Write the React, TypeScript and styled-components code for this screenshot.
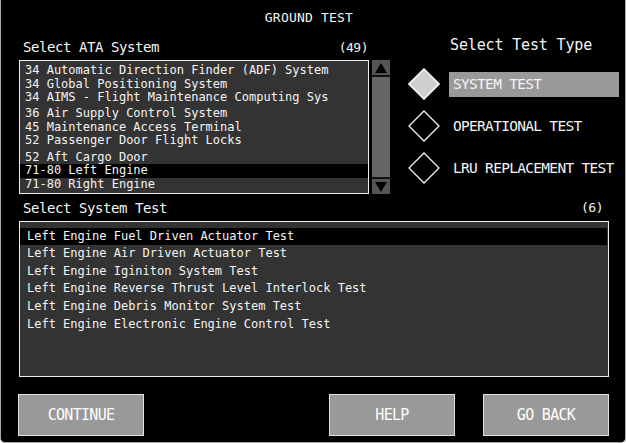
import React from "react";
import styled, { createGlobalStyle } from "styled-components";

const Global = createGlobalStyle`
  html, body { margin: 0; padding: 0; background: #fff; }
  #root { width: 626px; height: 443px; }
`;

const Frame = styled.div`
  width: 626px;
  height: 443px;
  box-sizing: border-box;
  background: #000;
  border: 1px solid #aaa;
  border-top: none;
  border-radius: 0 0 5px 5px;
  display: flex;
  flex-direction: column;
  color: #f4f4f4;
  font-family: "DejaVu Sans Mono", monospace;
  overflow: hidden;
`;

const Header = styled.div`
  height: 34px;
  display: flex;
  align-items: center;
  justify-content: center;
  padding-right: 8px;
  font-size: 13px;
  letter-spacing: 0.2px;
`;

const TopSection = styled.div`
  display: flex;
  height: 160px;
  padding-left: 18px;
`;

const AtaColumn = styled.div`
  width: 371px;
  display: flex;
  flex-direction: column;
`;

const LabelRow = styled.div<{ $h: number; $pl: number; $pr: number }>`
  height: ${(p) => p.$h}px;
  display: flex;
  align-items: center;
  justify-content: space-between;
  padding: 0 ${(p) => p.$pr}px 0 ${(p) => p.$pl}px;
`;

const Label = styled.span`
  font-size: 14px;
  letter-spacing: -0.43px;
`;

const Count = styled.span`
  font-size: 13px;
  letter-spacing: -0.5px;
`;

const ListArea = styled.div`
  display: flex;
  gap: 3px;
  height: 134px;
`;

const AtaList = styled.div`
  width: 350px;
  box-sizing: border-box;
  border: 1px solid #eee;
  background: #333;
  padding-top: 3.3px;
  overflow: hidden;
`;

const AtaRow = styled.div<{ $selected?: boolean; $extra?: boolean }>`
  height: 13.5px;
  line-height: 13.5px;
  margin-top: ${(p) => (p.$extra ? 2.7 : 0)}px;
  font-size: 12px;
  padding-left: 5px;
  white-space: nowrap;
  background: ${(p) => (p.$selected ? "#000" : "transparent")};
`;

const Scrollbar = styled.div`
  width: 18px;
  display: flex;
  flex-direction: column;
  gap: 2px;
  background: #111;
`;

const ScrollButton = styled.div`
  height: 15px;
  background: #555;
  display: flex;
  align-items: center;
  justify-content: center;
`;

const Track = styled.div`
  flex: 1;
  background: #666;
`;

const RightColumn = styled.div`
  margin-left: 19px;
  width: 216px;
  display: flex;
  flex-direction: column;
`;

const TypeHeading = styled.div`
  height: 22px;
  line-height: 22px;
  padding-left: 41px;
  font-size: 15px;
  letter-spacing: -0.15px;
`;

const Options = styled.div`
  margin-top: 7px;
  display: flex;
  flex-direction: column;
`;

const OptionRow = styled.div`
  height: 42px;
  display: flex;
  align-items: center;
`;

const DiamondIcon = styled.svg`
  width: 32px;
  height: 32px;
  margin-left: -1px;
  margin-right: 9px;
  flex: none;
`;

const OptionLabel = styled.div<{ $selected?: boolean }>`
  width: 170px;
  height: 25px;
  line-height: 25px;
  padding-left: 4px;
  box-sizing: border-box;
  background: ${(p) => (p.$selected ? "#999" : "transparent")};
  font-size: 14.5px;
  letter-spacing: -0.7px;
  white-space: nowrap;
`;

const TestList = styled.div`
  margin: 0 16px 0 18px;
  height: 156px;
  box-sizing: border-box;
  border: 1px solid #eee;
  background: #333;
  padding-top: 5.7px;
`;

const TestRow = styled.div<{ $selected?: boolean }>`
  height: 17.6px;
  line-height: 17.6px;
  font-size: 12px;
  padding-left: 7px;
  margin-right: 1px;
  white-space: nowrap;
  background: ${(p) => (p.$selected ? "#000" : "transparent")};
`;

const ButtonRow = styled.div`
  margin-top: 17px;
  height: 42px;
  display: flex;
  padding: 0 16px 0 17px;
`;

const Spacer = styled.div`
  flex: 1;
`;

const Button = styled.button<{ $mr?: number }>`
  width: 126px;
  height: 42px;
  box-sizing: border-box;
  margin: 0 ${(p) => p.$mr ?? 0}px 0 0;
  padding: 0;
  background: #999;
  border: 1px solid #e2e2e2;
  color: #fff;
  font-family: "DejaVu Sans Mono", monospace;
  font-size: 15px;
  letter-spacing: -0.7px;
  cursor: pointer;
`;

const ataSystems = [
  { name: "34 Automatic Direction Finder (ADF) System" },
  { name: "34 Global Positioning System" },
  { name: "34 AIMS - Flight Maintenance Computing Sys" },
  { name: "36 Air Supply Control System", extra: true },
  { name: "45 Maintenance Access Terminal" },
  { name: "52 Passenger Door Flight Locks" },
  { name: "52 Aft Cargo Door", extra: true },
  { name: "71-80 Left Engine" },
  { name: "71-80 Right Engine" },
];

const testTypes = ["SYSTEM TEST", "OPERATIONAL TEST", "LRU REPLACEMENT TEST"];

const systemTests = [
  "Left Engine Fuel Driven Actuator Test",
  "Left Engine Air Driven Actuator Test",
  "Left Engine Iginiton System Test",
  "Left Engine Reverse Thrust Level Interlock Test",
  "Left Engine Debris Monitor System Test",
  "Left Engine Electronic Engine Control Test",
];

const Diamond = ({ filled }: { filled: boolean }) => (
  <DiamondIcon viewBox="0 0 32 32">
    <polygon
      points="16,1 31,16 16,31 1,16"
      fill={filled ? "#cfcfcf" : "none"}
      stroke="#f4f4f4"
      strokeWidth={filled ? 1.6 : 1.3}
    />
  </DiamondIcon>
);

const Arrow = ({ up }: { up: boolean }) => (
  <svg width="14" height="12" viewBox="0 0 14 12">
    <polygon points={up ? "7,1 13,11 1,11" : "1,1 13,1 7,11"} fill="#000" />
  </svg>
);

export default function App() {
  return (
    <>
      <Global />
      <Frame>
        <Header>GROUND TEST</Header>
        <TopSection>
          <AtaColumn>
            <LabelRow $h={26} $pl={4} $pr={22}>
              <Label>Select ATA System</Label>
              <Count>(49)</Count>
            </LabelRow>
            <ListArea>
              <AtaList>
                {ataSystems.map((s, i) => (
                  <AtaRow key={s.name} $selected={i === 7} $extra={s.extra}>
                    {s.name}
                  </AtaRow>
                ))}
              </AtaList>
              <Scrollbar>
                <ScrollButton>
                  <Arrow up />
                </ScrollButton>
                <Track />
                <ScrollButton>
                  <Arrow up={false} />
                </ScrollButton>
              </Scrollbar>
            </ListArea>
          </AtaColumn>
          <RightColumn>
            <TypeHeading>Select Test Type</TypeHeading>
            <Options>
              {testTypes.map((t, i) => (
                <OptionRow key={t}>
                  <Diamond filled={i === 0} />
                  <OptionLabel $selected={i === 0}>{t}</OptionLabel>
                </OptionRow>
              ))}
            </Options>
          </RightColumn>
        </TopSection>
        <LabelRow $h={27} $pl={22} $pr={22}>
          <Label>Select System Test</Label>
          <Count>(6)</Count>
        </LabelRow>
        <TestList>
          {systemTests.map((t, i) => (
            <TestRow key={t} $selected={i === 0}>
              {t}
            </TestRow>
          ))}
        </TestList>
        <ButtonRow>
          <Button>CONTINUE</Button>
          <Spacer />
          <Button $mr={28}>HELP</Button>
          <Button>GO BACK</Button>
        </ButtonRow>
      </Frame>
    </>
  );
}
